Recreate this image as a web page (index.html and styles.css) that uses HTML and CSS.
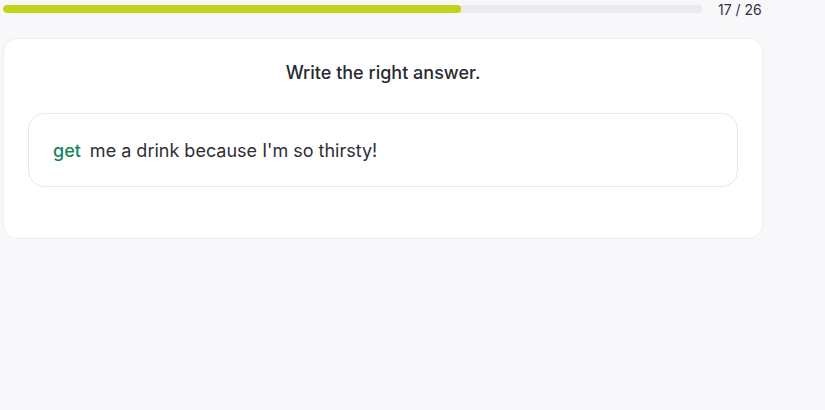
FILE: index.html
```html
<!DOCTYPE html>
<html lang="en">
<head>
<meta charset="utf-8">
<link rel="stylesheet" href="styles.css">
</head>
<body>
<div class="page">
  <div class="progress-row">
    <div class="track"><div class="fill" style="width:65.5%"></div></div>
    <span class="count">17 / 26</span>
  </div>
  <div class="card">
    <h1 class="title">Write the right answer.</h1>
    <div class="answer">
      <span class="word">get</span><span class="rest">me a drink because I'm so thirsty!</span>
    </div>
  </div>
</div>
</body>
</html>
```
FILE: styles.css
```css
html, body {
  margin: 0;
  padding: 0;
  background: #f8f8fa;
}
body {
  font-family: Inter, "Noto Sans", sans-serif;
  color: #2a2a33;
}
.page {
  width: 760px;
  padding: 0 0 0 3px;
}
.progress-row {
  display: flex;
  align-items: center;
  height: 18px;
  margin-bottom: 20px;
}
.track {
  width: 699px;
  height: 8px;
  border-radius: 4px;
  background: #ebebee;
  overflow: hidden;
}
.fill {
  height: 100%;
  background: #bfd319;
  border-radius: 4px;
}
.count {
  margin-left: 16px;
  font-size: 14px;
  color: #33333b;
  white-space: nowrap;
}
.card {
  background: #fff;
  border: 1px solid #efeff2;
  border-radius: 14px;
  padding: 22px 24px 51px;
}
.title {
  margin: 0 0 28px;
  text-align: center;
  font-size: 18px;
  font-weight: 500;
  line-height: 24px;
  color: #2a2a33;
}
.answer {
  display: flex;
  align-items: center;
  height: 72px;
  padding: 0 24px;
  border: 1px solid #e8e8ec;
  border-radius: 16px;
  font-size: 18px;
}
.word {
  color: #16875a;
  font-weight: 500;
  margin-right: 9px;
}
.rest {
  color: #2e2e38;
}
```
